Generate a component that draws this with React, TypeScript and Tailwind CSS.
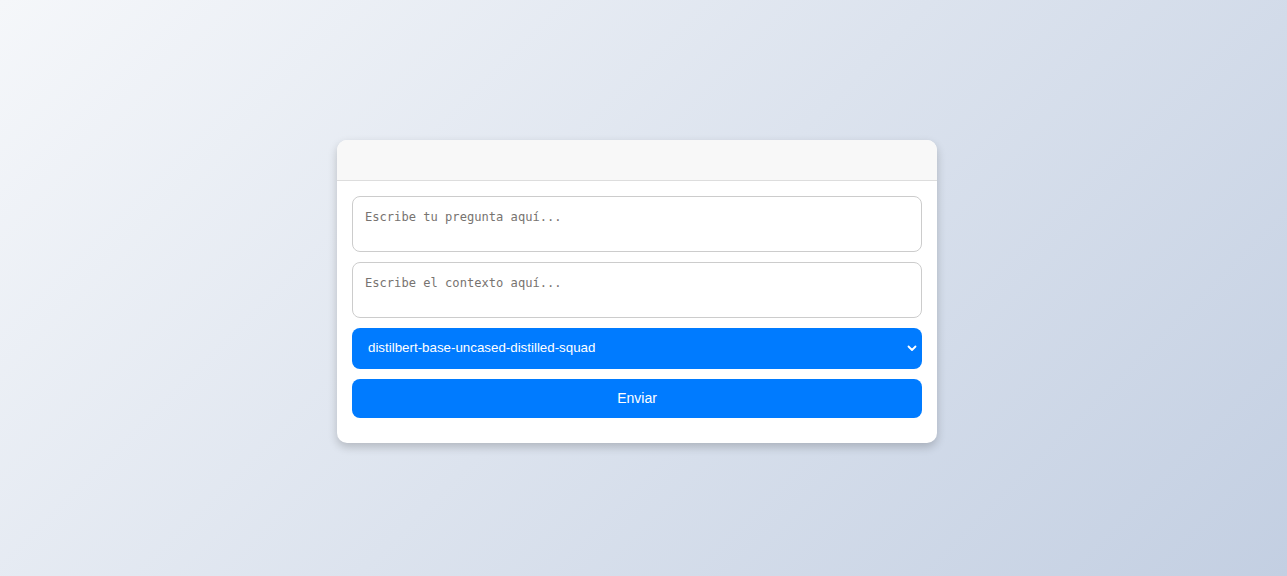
import React from "react";

export default function App() {
  return (
    <div className="w-full h-[576px] flex items-center justify-center pt-[6px] pr-[13px] bg-[linear-gradient(135deg,#f5f7fa_0%,#c3cfe2_100%)]">
      <div className="w-[600px] bg-white rounded-[10px] shadow-[0_4px_10px_rgba(0,0,0,0.2)] overflow-hidden">
        <div className="h-[41px] bg-[#f8f8f8] border-b border-[#dddddd]" />
        <div className="px-[15px] pt-[15px] pb-[25px] flex flex-col gap-[10px]">
          <textarea
            className="block w-full h-[56px] border border-[#cccccc] rounded-[8px] px-[12px] pt-[13px] pb-[11px] text-[12.1px] leading-[15px] resize-none outline-none placeholder:text-[#777370] font-['DejaVu_Sans_Mono',monospace]"
            placeholder="Escribe tu pregunta aquí..."
          />
          <textarea
            className="block w-full h-[56px] border border-[#cccccc] rounded-[8px] px-[12px] pt-[13px] pb-[11px] text-[12.1px] leading-[15px] resize-none outline-none placeholder:text-[#777370] font-['DejaVu_Sans_Mono',monospace]"
            placeholder="Escribe el contexto aquí..."
          />
          <div className="relative h-[41px] bg-[#007bff] rounded-[8px] flex items-center pl-[16px] text-white text-[13.33px] font-['Liberation_Sans',Arial,sans-serif]">
            <span>distilbert-base-uncased-distilled-squad</span>
            <svg className="absolute right-[5px] top-1/2 -translate-y-1/2" width="10" height="10" viewBox="0 0 10 10" fill="none">
              <path d="M1.5 3.5 L5 7 L8.5 3.5" stroke="white" strokeWidth="1.8" strokeLinecap="round" strokeLinejoin="round" />
            </svg>
          </div>
          <button className="h-[39px] w-full bg-[#007bff] rounded-[8px] text-white text-[14px] font-['Liberation_Sans',Arial,sans-serif]">
            Enviar
          </button>
        </div>
      </div>
    </div>
  );
}
